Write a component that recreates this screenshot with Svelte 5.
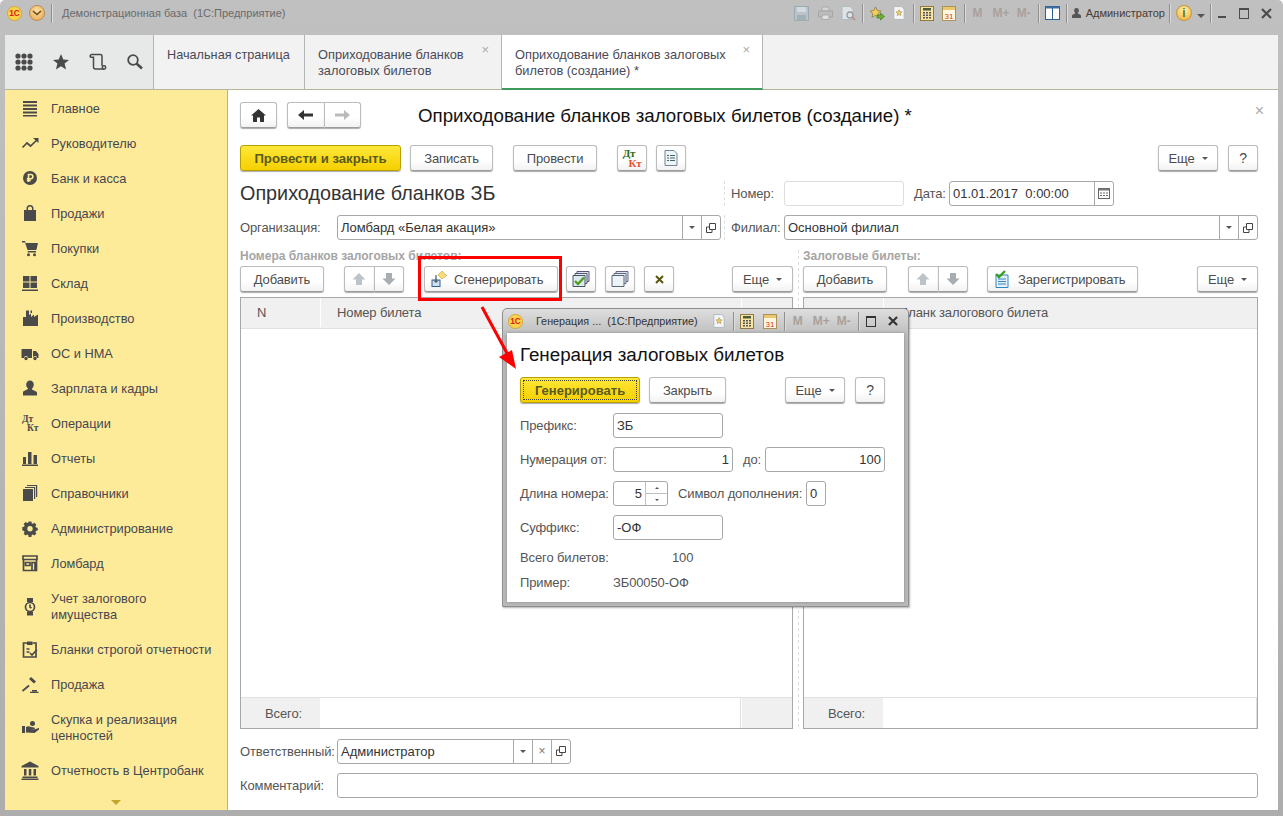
<script lang="ts">
    const DARK = '#4a4a4a';

    type NavItem = { label: string[]; d?: string; s?: string; b?: string; kt?: boolean };

    const nav: NavItem[] = [
        { label: ['Главное'], d: 'M2 2h14v2H2zM2 5.500h14v2H2zM2 9h14v2H2zM2 12.500h14v2H2zM2 16h14v1.500H2z' },
        { label: ['Руководителю'], s: 'M1.500 13.500 6 9l3.500 3L16 6', d: 'M12 4h5.500v5z' },
        { label: ['Банк и касса'], d: 'M9 2a7 7 0 1 0 0 14A7 7 0 0 0 9 2z', b: 'M7.500 13V5.500h2.300a2 2 0 0 1 0 4.200H5.800M5.800 11.500h4' },
        { label: ['Продажи'], d: 'M3 6h2.500V4.500a3.500 3.500 0 0 1 7 0V6H15v11H3zM7 6h4V4.500a2 2 0 0 0-4 0z' },
        { label: ['Покупки'], d: 'M1 2h3l.6 2H17l-1.600 7H6.500L4 3.500H1zM6.700 12h8.300v1.500H6.700zM7.500 14.200a1.500 1.500 0 1 0 0 3 1.500 1.500 0 0 0 0-3zM13.500 14.200a1.500 1.500 0 1 0 0 3 1.500 1.500 0 0 0 0-3z' },
        { label: ['Склад'], d: 'M2 2h6.500v5.500H2zM9.500 2H16v5.500H9.500zM2 8.500h6.500V14H2zM9.500 8.500H16V14H9.500zM1 15.500h16V17H1z' },
        { label: ['Производство'], d: 'M2 17V8l3 0V1.500h3V6l2-1.500V8l3-2.500V8l4-2.500V17zM9.500 1.500H11V4H9.500z' },
        { label: ['ОС и НМА'], d: 'M0.500 5h10.500v9H7a2 2 0 0 0-4 0H.500zM12 7h3l2.500 3v4H16a2 2 0 0 0-4 0zM5 12.800a1.700 1.700 0 1 0 0 3.400 1.700 1.700 0 0 0 0-3.400zM14 12.800a1.700 1.700 0 1 0 0 3.400 1.700 1.700 0 0 0 0-3.400z' },
        { label: ['Зарплата и кадры'], d: 'M9 1.500a3.800 3.800 0 0 1 3.800 4c0 2-1 3.500-1.800 4v1l4 2c.8.400 1 1 1 1.500v2.500H2V13.500c0-.5.200-1.100 1-1.500l4-2V9.500c-.8-.5-1.800-2-1.800-4a3.800 3.800 0 0 1 3.800-4z' },
        { label: ['Операции'], kt: true },
        { label: ['Отчеты'], d: 'M2 8h3v7H2zM7 3h3.500v12H7zM12.500 6H16v9h-3.500zM1 15.500h16V17H1z' },
        { label: ['Справочники'], d: 'M2 5h10v12H2zM13 4v11h1.200V3H4v1zM15 2v11h1.200V1H6v1z' },
        { label: ['Администрирование'], d: 'M7.600 2.500h2.800l.3 1.800 1.200.5 1.500-1 2 2-1 1.500.5 1.200 1.800.3v2.800l-1.800.3-.5 1.200 1 1.500-2 2-1.500-1-1.200.5-.3 1.800H7.600l-.3-1.800-1.200-.5-1.500 1-2-2 1-1.500-.5-1.200-1.800-.3V8.100l1.800-.3.5-1.200-1-1.500 2-2 1.500 1 1.200-.5zM9 7a2.700 2.700 0 1 0 0 5.400A2.700 2.700 0 0 0 9 7z' },
        { label: ['Ломбард'], s: 'M2.500 5.500V16.500H15.500V5.500M2 2h14v3.500H2zM4.500 8.500H9v3H4.500zM11 8.500h3v8h-3z' },
        { label: ['Учет залогового', 'имущества'], s: 'M9 5.500a4.500 4.500 0 1 0 0 9 4.500 4.500 0 0 0 0-9zM9 7.500V10l1.500 1', d: 'M6 1h6v4H6zM6 15h6v3.500H6z' },
        { label: ['Бланки строгой отчетности'], s: 'M6 3H2.500V17H15V3h-3.500M5.500 9h3M5.500 12h3M9 13l2 2 5-5.500', d: 'M6 1.500h5.500V5H6z' },
        { label: ['Продажа'], s: 'M1.500 16 8 10.500', d: 'M8 4l2-2 5 4.500-2 2zM11 15h5v1.500h-5zM9 16.700h8.500V18H9z' },
        { label: ['Скупка и реализация', 'ценностей'], d: 'M1 8h3v7H1zM5 9c2-1 3-1 5 0l3 .5c1 0 1 2 0 2h-3l5-.5 2.500-1c1 0 1 1 .5 1.500L13.500 15 5 14.500zM11.500 3a2.500 2.500 0 1 0 0 5 2.500 2.500 0 0 0 0-5z' },
        { label: ['Отчетность в Центробанк'], d: 'M9 .500 17.500 5v1.500H.500V5zM3 8h2.500v6.500H3zM7.800 8h2.500v6.500H7.800zM12.500 8H15v6.500h-2.500zM1.500 15.500h15V17h-15zM.500 17.500h17V19H.500z' }
    ];

    const sideTools = ['grid', 'star', 'history', 'search'];
</script>

{#snippet logo(size)}
    <svg class="logo" width={size} height={size} viewBox="0 0 18 18">
        <circle cx="9" cy="9" r="8.500" fill="#f9d24a" stroke="#d0a030" />
        <text x="9" y="12.500" text-anchor="middle" class="logo-t">1С</text>
    </svg>
{/snippet}

{#snippet calc()}
    <svg width="14" height="15" viewBox="0 0 14 15"><rect x=".5" y=".5" width="13" height="14" fill="#f6e3a4" stroke="#8d7a44" /><rect x="3" y="2" width="8" height="2.500" fill="#4d5a3a" /><path d="M3 6h2v1.500H3zM6 6h2v1.500H6zM9 6h2v1.500H9zM3 8.500h2V10H3zM6 8.500h2V10H6zM9 8.500h2V10H9zM3 11h2v1.500H3zM6 11h2v1.500H6zM9 11h2v1.500H9z" fill="#555" /></svg>
{/snippet}

{#snippet cal()}
    <svg width="14" height="15" viewBox="0 0 14 15"><rect x=".5" y=".5" width="13" height="14" fill="#fff6e0" stroke="#a9935a" /><rect x="1" y="1" width="12" height="3" fill="#e9c66f" /><text x="7" y="12.500" text-anchor="middle" class="cal-t">31</text></svg>
{/snippet}

{#snippet memory()}
    <span class="mem">M</span><span class="mem m2">M+</span><span class="mem m3">M-</span>
{/snippet}

{#snippet starDoc(w)}
    <svg width={w} height={w + 2} viewBox="0 0 14 16"><path d="M1 .5h9l3 3v12H1z" fill="#f4f6f8" stroke="#aab4bc" /><path d="M7 4l1.100 2.400 2.500.3-1.900 1.700.5 2.600L7 9.700 4.800 11l.5-2.600-1.900-1.700 2.500-.3z" fill="#eccd6a" stroke="#a58a3a" stroke-width=".6" /></svg>
{/snippet}

<div class="window">
    <header class="titlebar">
        <div class="tb-left">
            {@render logo(15)}
            <span class="round-btn"><svg width="10" height="6" viewBox="0 0 10 6"><path d="M1 1l4 3.500L9 1" fill="none" stroke="#6a4a20" stroke-width="1.600" /></svg></span>
            <i class="vsep first"></i>
            <span class="tb-title">Демонстрационная база  (1С:Предприятие)</span>
        </div>
        <div class="tb-right">
            <svg class="t0" width="15" height="15" viewBox="0 0 15 15"><path d="M.5.5h14v14H.5z" fill="#b9c3c9" stroke="#9aa8b0" /><path d="M3 1h9v5H3z" fill="#d4dade" /><path d="M3 9h9v5.500H3z" fill="#a4b0b8" /></svg>
            <svg class="t1" width="15" height="14" viewBox="0 0 15 14"><path d="M4 1h7v4H4z" fill="#d5d5d5" stroke="#aaa" /><path d="M.5 5h14v6H.5z" fill="#bbb" stroke="#a5a5a5" /><path d="M4 9h7v4.500H4z" fill="#e0e0e0" stroke="#aaa" /></svg>
            <svg class="t2" width="15" height="15" viewBox="0 0 15 15"><path d="M1 .5h8l3 3v10H1z" fill="#dde3e6" stroke="#aebbc2" /><circle cx="9" cy="9" r="3" fill="none" stroke="#9a9a9a" stroke-width="1.300" /><path d="M11 11l3 3" stroke="#b88a7a" stroke-width="1.600" /></svg>
            <i class="vsep t3"></i>
            <svg class="t4" width="16" height="15" viewBox="0 0 16 15"><path d="M6.500 1l1.700 3.600 3.800.4-2.800 2.500.8 3.800-3.500-2-3.500 2 .8-3.800L1 5l3.800-.4z" fill="#efcf5e" stroke="#8f7a3c" stroke-width=".8" /><path d="M8 9h3.500V7l4 3.500-4 3.500v-2H8z" fill="#6eb132" stroke="#3f7a1c" stroke-width=".7" /></svg>
            <span class="t5">{@render starDoc(12)}</span>
            <i class="vsep t6"></i>
            <span class="t7">{@render calc()}</span>
            <span class="t8">{@render cal()}</span>
            <i class="vsep t9"></i>
            {@render memory()}
            <i class="vsep t10"></i>
            <svg class="t11" width="15" height="14" viewBox="0 0 15 14"><rect x=".5" y=".5" width="14" height="13" fill="#fdfdfd" stroke="#2f5f90" /><path d="M.5.5h14v2H.5z" fill="#3c6ea3" /><path d="M7.500 2v11" stroke="#2f5f90" /></svg>
            <i class="vsep t12"></i>
            <svg class="t13" width="9" height="10" viewBox="0 0 9 10"><path d="M4.500 0a2.300 2.300 0 0 1 2.300 2.600c0 1-.5 1.900-1 2.300v.7l2.200 1c.6.3 1 .7 1 1.400V10H0V8c0-.7.400-1.100 1-1.400l2.200-1v-.7c-.5-.4-1-1.300-1-2.300A2.300 2.300 0 0 1 4.500 0z" fill="#555" /></svg>
            <span class="t-user">Администратор</span>
            <i class="vsep t14"></i>
            <span class="info">i</span>
            <svg class="t15" width="8" height="4" viewBox="0 0 8 4"><path d="M0 0h8L4 4z" fill="#555" /></svg>
            <i class="vsep t16"></i>
            <span class="win-min"></span>
            <span class="win-max"></span>
            <svg class="win-close" width="11" height="11" viewBox="0 0 11 11"><path d="M1 1l9 9M10 1l-9 9" stroke="#4c4c4c" stroke-width="2.200" /></svg>
        </div>
    </header>

    <nav class="tabsrow">
        <div class="tools">
            {#each sideTools as t}
                <span class="tool">
                    {#if t === 'grid'}
                        <svg width="18" height="18" viewBox="0 0 18 18" fill="#4a4a4a">
                            {#each [3, 9, 15] as y}{#each [3, 9, 15] as x}<circle cx={x} cy={y} r="2.600" />{/each}{/each}
                        </svg>
                    {:else if t === 'star'}
                        <svg width="18" height="18" viewBox="0 0 18 18"><path d="M9 1l2.300 5.500 5.700.4-4.400 3.700 1.500 5.900L9 13.300l-5.100 3.200 1.500-5.900L1 6.900l5.700-.4z" fill="#4a4a4a" /></svg>
                    {:else if t === 'history'}
                        <svg width="18" height="18" viewBox="0 0 18 18" fill="none" stroke="#4a4a4a" stroke-width="1.500"><path d="M3 1.500h8.500c1 0 1.500 1 1.500 2V13M3 1.500a1.500 1.500 0 0 0-1 2.800h2.500V14c0 1.200.8 2 2 2h8.500" /><circle cx="15" cy="14.500" r="1.700" /></svg>
                    {:else}
                        <svg width="18" height="18" viewBox="0 0 18 18" fill="none" stroke="#4a4a4a"><circle cx="7" cy="7" r="4.800" stroke-width="1.800" /><path d="M10.500 10.500l5.500 5" stroke-width="2.600" /></svg>
                    {/if}
                </span>
            {/each}
        </div>
        <div class="tab t-home">Начальная страница</div>
        <div class="tab t-doc">
            <span>Оприходование бланков<br />залоговых билетов</span>
            <b class="tab-x">×</b>
        </div>
        <div class="tab t-active">
            <span>Оприходование бланков залоговых<br />билетов (создание) *</span>
            <b class="tab-x">×</b>
        </div>
    </nav>

    <div class="main">
        <aside class="sidebar">
            <ul>
                {#each nav as item}
                    <li class:two={item.label.length > 1}>
                        <span class="nav-ic">
                            <svg width="18" height="19" viewBox="0 0 18 19">
                                {#if item.kt}
                                    <text x="1" y="8" class="kt">Дт</text>
                                    <text x="6" y="17" class="kt">Кт</text>
                                {/if}
                                {#if item.d}<path d={item.d} fill={DARK} fill-rule="evenodd" />{/if}
                                {#if item.s}<path d={item.s} fill="none" stroke={DARK} stroke-width="1.700" />{/if}
                                {#if item.b}<path d={item.b} fill="none" stroke="#fdeb9a" stroke-width="1.600" />{/if}
                            </svg>
                        </span>
                        <span class="nav-txt">
                            {#each item.label as line}<span>{line}</span>{/each}
                        </span>
                    </li>
                {/each}
            </ul>
            <div class="more-arrow"></div>
        </aside>

        <main class="content">
            <div class="navrow">
                <button class="btn home">
                    <svg width="15" height="13" viewBox="0 0 15 13"><path d="M7.500 0 15 6.500h-2V13H9V8.500H6V13H2V6.500H0z" fill="#333" /></svg>
                </button>
                <div class="pair nav-pair">
                    <button class="btn">
                        <svg width="15" height="10" viewBox="0 0 15 10"><path d="M6 0v3.500h9v3H6V10L0 5z" fill="#333" /></svg>
                    </button>
                    <button class="btn">
                        <svg width="15" height="10" viewBox="0 0 15 10"><path d="M9 0v3.500H0v3h9V10l6-5z" fill="#bbb" /></svg>
                    </button>
                </div>
                <h1>Оприходование бланков залоговых билетов (создание) *</h1>
                <span class="close-form">×</span>
            </div>

            <div class="cmdbar">
                <button class="btn yellow b-post">Провести и закрыть</button>
                <button class="btn b-save">Записать</button>
                <button class="btn b-run">Провести</button>
                <button class="btn sq b-dt"><span class="dt">Дт</span><span class="kt2">Кт</span></button>
                <button class="btn sq">
                    <svg width="14" height="16" viewBox="0 0 14 16"><path d="M1 .5h9l3 3v12H1z" fill="#eef3f6" stroke="#6d8798" /><path d="M3 5h2v1H3zM6 5h5v1H6zM3 7.500h2v1H3zM6 7.500h5v1H6zM3 10h2v1H3zM6 10h5v1H6z" fill="#466" /></svg>
                </button>
                <button class="btn more spacer">Еще<i class="caret"></i></button>
                <button class="btn sq help">?</button>
            </div>

            <div class="head-grid">
                <div class="doc-title">Оприходование бланков ЗБ</div>
                <div class="head-right">
                    <label class="lbl w53" for="num">Номер:</label>
                    <input id="num" class="field disabled w120" />
                    <span class="lbl date-lbl">Дата:</span>
                    <div class="field combo w165">
                        <span class="val">01.01.2017  0:00:00</span>
                        <span class="cell w19"><svg width="12" height="11" viewBox="0 0 12 11"><rect x=".5" y=".5" width="11" height="10" fill="#fff" stroke="#666" /><path d="M.5 .5h11v2H.5z" fill="#777" /><path d="M2 4.500h2v1H2zM5 4.500h2v1H5zM8 4.500h2v1H8zM2 7h2v1H2zM5 7h2v1H5zM8 7h2v1H8z" fill="#666" /></svg></span>
                    </div>
                </div>
                <div class="org">
                    <span class="lbl w97">Организация:</span>
                    <div class="field combo grow">
                        <span class="val">Ломбард «Белая акация»</span>
                        <span class="cell"><i class="caret"></i></span>
                        <span class="cell"><svg width="10" height="10" viewBox="0 0 10 10" fill="none" stroke="#444"><path d="M3.500.5h6v6h-6zM3.500 4H.5v5.500H6V7" /></svg></span>
                    </div>
                </div>
                <div class="branch">
                    <span class="lbl w53">Филиал:</span>
                    <div class="field combo grow">
                        <span class="val">Основной филиал</span>
                        <span class="cell"><i class="caret"></i></span>
                        <span class="cell"><svg width="10" height="10" viewBox="0 0 10 10" fill="none" stroke="#444"><path d="M3.500.5h6v6h-6zM3.500 4H.5v5.500H6V7" /></svg></span>
                    </div>
                </div>
            </div>

            <div class="panes">
                <section class="pane left">
                    <div class="pane-label">Номера бланков залоговых билетов:</div>
                    <div class="pane-bar">
                        <button class="btn add">Добавить</button>
                        <div class="pair updown">
                            <button class="btn"><svg width="14" height="14" viewBox="0 0 14 14"><path d="M7 1l6.500 6.500H10V13H4V7.500H.5z" fill="#bcc3c9" /></svg></button>
                            <button class="btn"><svg width="14" height="14" viewBox="0 0 14 14"><path d="M7 13 .5 6.500H4V1h6v5.500h3.500z" fill="#a8adb2" /></svg></button>
                        </div>
                        <button class="btn gen">
                            <svg width="16" height="16" viewBox="0 0 16 16"><path d="M11 0l4.500 4.500L11 8 7 4z" fill="#f6dd7a" stroke="#d0a838" stroke-width=".7" /><rect x="1" y="9" width="8" height="6.500" fill="#cfe0f0" stroke="#2f5f90" /><path d="M5 4v7M3 9.500l2 2 2-2" fill="none" stroke="#333" /></svg>
                            Сгенерировать
                        </button>
                        <button class="btn sq">
                            <svg width="18" height="17" viewBox="0 0 18 17"><path d="M5 .5h12v10H5z" fill="#dbe6ea" stroke="#557" /><path d="M3 2.500h12v10H3z" fill="#e6eef2" stroke="#557" /><path d="M1 4.500h12v11H1z" fill="#dfeaef" stroke="#456" /><path d="M3 10l3 3 6-6.500" fill="none" stroke="#4aa020" stroke-width="2.400" /></svg>
                        </button>
                        <button class="btn sq">
                            <svg width="18" height="17" viewBox="0 0 18 17"><path d="M5 .5h12v10H5z" fill="#dbe6ea" stroke="#668" /><path d="M3 2.500h12v10H3z" fill="#e6eef2" stroke="#668" /><path d="M1 4.500h12v11H1z" fill="#eef3f6" stroke="#567" /></svg>
                        </button>
                        <button class="btn sq">
                            <svg width="9" height="9" viewBox="0 0 9 9"><path d="M1 1l7 7M8 1 1 8" stroke="#5a5510" stroke-width="2" /></svg>
                        </button>
                        <button class="btn more spacer">Еще<i class="caret"></i></button>
                    </div>
                    <div class="table">
                        <div class="thead">
                            <span class="c-n">N</span>
                            <span class="c-main">Номер билета</span>
                            <span class="c-end"></span>
                        </div>
                        <div class="tbody"></div>
                        <div class="tfoot">
                            <span class="c-n total">Всего:</span>
                            <span class="c-main blank"></span>
                            <span class="c-end"></span>
                        </div>
                    </div>
                </section>

                <div class="dash"></div>

                <section class="pane right">
                    <div class="pane-label">Залоговые билеты:</div>
                    <div class="pane-bar">
                        <button class="btn add">Добавить</button>
                        <div class="pair updown r">
                            <button class="btn"><svg width="14" height="14" viewBox="0 0 14 14"><path d="M7 1l6.500 6.500H10V13H4V7.500H.5z" fill="#bcc3c9" /></svg></button>
                            <button class="btn"><svg width="14" height="14" viewBox="0 0 14 14"><path d="M7 13 .5 6.500H4V1h6v5.500h3.500z" fill="#a8adb2" /></svg></button>
                        </div>
                        <button class="btn reg">
                            <svg width="17" height="18" viewBox="0 0 17 18"><path d="M2 5h12v12.500H2z" fill="#e2f0fa" stroke="#3585c0" /><path d="M4 9h8M4 11.500h8M4 14h8" stroke="#3585c0" /><path d="M2 4l3 3 6-6" fill="none" stroke="#36a01e" stroke-width="2.400" /></svg>
                            Зарегистрировать
                        </button>
                        <button class="btn more spacer">Еще<i class="caret"></i></button>
                    </div>
                    <div class="table">
                        <div class="thead">
                            <span class="c-n r">N</span>
                            <span class="c-main">Бланк залогового билета</span>
                        </div>
                        <div class="tbody"></div>
                        <div class="tfoot">
                            <span class="c-n r total">Всего:</span>
                            <span class="c-main blank"></span>
                        </div>
                    </div>
                </section>
            </div>

            <div class="bottom-row resp">
                <span class="lbl w97">Ответственный:</span>
                <div class="field combo w234">
                    <span class="val">Администратор</span>
                    <span class="cell"><i class="caret"></i></span>
                    <span class="cell x">×</span>
                    <span class="cell"><svg width="10" height="10" viewBox="0 0 10 10" fill="none" stroke="#444"><path d="M3.500.5h6v6h-6zM3.500 4H.5v5.500H6V7" /></svg></span>
                </div>
            </div>
            <div class="bottom-row">
                <span class="lbl w97">Комментарий:</span>
                <input class="field grow" />
            </div>
        </main>
    </div>

    <!-- red callout drawn over the screenshot -->
    <div class="callout"></div>
    <svg class="arrow" width="60" height="90" viewBox="0 0 60 90">
        <path d="M2 2 28 50" stroke="#f00" stroke-width="3" />
        <path d="M36 64 19 52 32 45z" fill="#f00" />
    </svg>

    <div class="dialog">
        <div class="dlg-bar">
            {@render logo(15)}
            <span class="dlg-title">Генерация ...  (1С:Предприятие)</span>
            <span class="dlg-star">{@render starDoc(12)}</span>
            <i class="vsep d-a"></i>
            <span class="d-calc">{@render calc()}</span>
            <span class="d-cal">{@render cal()}</span>
            <i class="vsep d-b"></i>
            {@render memory()}
            <i class="vsep d-c"></i>
            <span class="win-max small"></span>
            <svg class="win-close small" width="10" height="10" viewBox="0 0 11 11"><path d="M1 1l9 9M10 1l-9 9" stroke="#333" stroke-width="2.300" /></svg>
        </div>
        <div class="dlg-body">
            <h2>Генерация залоговых билетов</h2>
            <div class="dlg-cmd">
                <button class="btn yellow focus">Генерировать</button>
                <button class="btn d-close">Закрыть</button>
                <button class="btn more spacer d-more">Еще<i class="caret"></i></button>
                <button class="btn sq help">?</button>
            </div>
            <div class="dlg-row">
                <span class="lbl w93">Префикс:</span>
                <div class="field w110"><span class="val">ЗБ</span></div>
            </div>
            <div class="dlg-row">
                <span class="lbl w93">Нумерация от:</span>
                <div class="field w120 right-al"><span class="val">1</span></div>
                <span class="lbl do">до:</span>
                <div class="field w120 right-al"><span class="val">100</span></div>
            </div>
            <div class="dlg-row">
                <span class="lbl w93">Длина номера:</span>
                <div class="field combo w55 right-al">
                    <span class="val">5</span>
                    <span class="spin"><i class="up"></i><i class="down"></i></span>
                </div>
                <span class="lbl sym">Символ дополнения:</span>
                <div class="field w20"><span class="val">0</span></div>
            </div>
            <div class="dlg-row">
                <span class="lbl w93">Суффикс:</span>
                <div class="field w110"><span class="val">-ОФ</span></div>
            </div>
            <div class="dlg-info first">
                <span class="lbl w93">Всего билетов:</span>
                <span class="lbl total-val">100</span>
            </div>
            <div class="dlg-info">
                <span class="lbl w93">Пример:</span>
                <span class="lbl">ЗБ00050-ОФ</span>
            </div>
        </div>
    </div>
</div>

<style>
    :global(body) {
        margin: 0;
        background: #fff;
    }
    .window {
        position: relative;
        box-sizing: border-box;
        width: 1283px;
        height: 816px;
        padding: 0 5px 6px;
        background: linear-gradient(#c0c0c0, #adadad);
        border-radius: 5px 5px 0 0;
        display: flex;
        flex-direction: column;
        overflow: hidden;
        font-family: "Liberation Sans", Arial, sans-serif;
        font-size: 13px;
        color: #4c4c4c;
    }
    button {
        font-family: inherit;
    }
    .vsep {
        display: block;
        flex: none;
        width: 1px;
        height: 19px;
        background: #8f8f8f;
        box-shadow: 1px 0 0 #ddd;
    }

    /* title bar */
    .titlebar {
        height: 35px;
        flex: none;
        display: flex;
        align-items: center;
        justify-content: space-between;
        padding-bottom: 9px;
        box-sizing: border-box;
    }
    .tb-left,
    .tb-right {
        display: flex;
        align-items: center;
    }
    .tb-left {
        padding-left: 2px;
    }
    .logo {
        display: block;
        flex: none;
    }
    .logo-t {
        font: bold 10px "Liberation Sans", sans-serif;
        fill: #dd1f17;
    }
    .cal-t {
        font: 8px "Liberation Sans", sans-serif;
        fill: #d83a10;
    }
    .round-btn {
        width: 16px;
        height: 16px;
        margin-left: 7px;
        border-radius: 50%;
        background: radial-gradient(circle at 50% 35%, #fbe0a0, #e9a450);
        border: 1px solid #bb8a4c;
        box-sizing: border-box;
        display: flex;
        align-items: center;
        justify-content: center;
    }
    .vsep.first {
        margin-left: 6px;
    }
    .tb-title {
        margin-left: 10px;
        white-space: pre;
        font-size: 11px;
        color: #6a6a6a;
    }
    .tb-right {
        padding-right: 6px;
    }
    .tb-right > * {
        flex: none;
    }
    .t1 { margin-left: 9px; }
    .t2 { margin-left: 8px; }
    .t3 { margin-left: 6px; }
    .t4 { margin-left: 6px; }
    .t5 { margin-left: 8px; }
    .t6 { margin-left: 8px; }
    .t7 { margin-left: 6px; }
    .t8 { margin-left: 8px; }
    .t9 { margin-left: 8px; }
    .t10 { margin-left: 7px; }
    .t11 { margin-left: 6px; }
    .t12 { margin-left: 6px; }
    .t13 { margin-left: 5px; }
    .t14 { margin-left: 4px; }
    .t15 { margin-left: 5px; margin-top: 6px; }
    .t16 { margin-left: 5px; }
    .t5, .t7, .t8, .dlg-star, .d-calc, .d-cal {
        display: flex;
        flex: none;
    }
    .mem {
        flex: none;
        margin-left: 8px;
        font-size: 12px;
        font-weight: bold;
        color: #aaa09a;
    }
    .mem.m2 {
        margin-left: 10px;
    }
    .mem.m3 {
        margin-left: 7px;
    }
    .t-user {
        margin-left: 5px;
        font-size: 11px;
        color: #4a3a30;
        white-space: nowrap;
    }
    .info {
        margin-left: 6px;
        width: 16px;
        height: 16px;
        border-radius: 50%;
        background: radial-gradient(circle at 50% 30%, #fff2b0, #eeaa30);
        border: 1px solid #c79536;
        box-sizing: border-box;
        text-align: center;
        font: bold 12px/14px "Liberation Sans", sans-serif;
        color: #5b7a14;
    }
    .win-min {
        width: 8px;
        height: 2px;
        margin: 8px 0 0 7px;
        background: #4c4c4c;
    }
    .win-max {
        flex: none;
        width: 8px;
        height: 8px;
        margin-left: 13px;
        border: 1.500px solid #4c4c4c;
        border-top-width: 2px;
    }
    .win-close {
        flex: none;
        margin-left: 12px;
    }

    /* tabs */
    .tabsrow {
        height: 55px;
        flex: none;
        display: flex;
        background: #f2f2f2;
        border-bottom: 1px solid #b5b39a;
        box-sizing: border-box;
    }
    .tools {
        width: 149px;
        flex: none;
        box-sizing: border-box;
        background: #e7e8e8;
        border-right: 1px solid #b4b4b4;
        display: flex;
        align-items: center;
        padding: 0 0 0 10px;
        gap: 19px;
    }
    .tool {
        display: flex;
    }
    .tab {
        flex: none;
        box-sizing: border-box;
        padding: 12px 0 0 13px;
        font-size: 12.800px;
        line-height: 16px;
        color: #4a4a58;
        border-right: 1px solid #b4b4b4;
        height: 54px;
        position: relative;
        white-space: nowrap;
    }
    .t-home {
        width: 151px;
        font-size: 12.700px;
    }
    .t-doc { width: 197px; }
    .t-active {
        width: 261px;
        background: #fff;
        border-bottom: 2px solid #3e9a5a;
        height: 55px;
    }
    .tab-x {
        position: absolute;
        right: 12px;
        top: 7px;
        font-weight: normal;
        font-size: 13px;
        color: #aaa;
    }

    /* sidebar */
    .main {
        flex: 1;
        min-height: 0;
        display: flex;
        background: #fff;
    }
    .sidebar {
        width: 223px;
        flex: none;
        box-sizing: border-box;
        background: #fdeb9a;
        border-right: 1px solid #c9b35a;
        display: flex;
        flex-direction: column;
        justify-content: space-between;
    }
    .sidebar ul {
        list-style: none;
        margin: 0;
        padding: 1px 0 0;
    }
    .sidebar li {
        height: 35px;
        display: flex;
        align-items: center;
        padding-left: 16px;
    }
    .sidebar li.two {
        height: 51px;
    }
    .nav-ic {
        width: 30px;
        flex: none;
        display: flex;
    }
    .kt {
        font: bold 9.500px "Liberation Serif", serif;
        fill: #4a4a4a;
    }
    .nav-txt {
        display: flex;
        flex-direction: column;
        font-size: 12.800px;
        line-height: 16px;
        color: #47474f;
        white-space: nowrap;
    }
    .more-arrow {
        align-self: center;
        margin-bottom: 5px;
        width: 0;
        height: 0;
        border: 5px solid transparent;
        border-top: 5px solid #c4a52c;
        border-bottom: 0;
    }

    /* form */
    .content {
        flex: 1;
        min-width: 0;
        box-sizing: border-box;
        padding: 12px 20px 12px 12px;
        display: flex;
        flex-direction: column;
    }
    .btn {
        height: 26px;
        box-sizing: border-box;
        padding: 0;
        border: 1px solid #bcbcbc;
        border-bottom-color: #9c9c9c;
        border-radius: 3px;
        background: linear-gradient(#fff 60%, #f2f2f2);
        box-shadow: 0 1px 1px #aaa;
        font-size: 13px;
        letter-spacing: -.12px;
        color: #4c4c4c;
        display: flex;
        align-items: center;
        justify-content: center;
        flex: none;
    }
    .btn.yellow {
        background: linear-gradient(#ffe83a, #f5cf00);
        border-color: #b8a000;
        font-weight: bold;
        font-size: 13px;
        letter-spacing: 0;
        color: #5a5a20;
    }
    .b-post.btn {
        font-size: 13.200px;
    }
    .btn.sq {
        width: 30px;
    }
    .btn.more {
        width: 60px;
    }
    .pane-bar .btn.more {
        width: 61px;
    }
    .spacer {
        margin-left: auto;
    }
    .caret {
        display: inline-block;
        width: 0;
        height: 0;
        border: 3px solid transparent;
        border-top: 3px solid #555;
        border-bottom: 0;
    }
    .btn .caret {
        margin-left: 7px;
    }
    .pair {
        display: flex;
        flex: none;
    }
    .pair .btn {
        flex: 1;
        border-radius: 0;
    }
    .pair .btn:first-child {
        border-radius: 3px 0 0 3px;
        border-right: 0;
    }
    .pair .btn:last-child {
        border-radius: 0 3px 3px 0;
    }
    .navrow {
        height: 26px;
        display: flex;
        align-items: center;
        flex: none;
    }
    .home {
        width: 37px;
    }
    .nav-pair {
        width: 74px;
        margin-left: 10px;
    }
    h1 {
        margin: 1px 0 0 57px;
        font-size: 18.700px;
        font-weight: normal;
        color: #111;
        white-space: nowrap;
    }
    .close-form {
        margin-left: auto;
        margin-right: -6px;
        margin-top: -8px;
        font-size: 16px;
        color: #aaa;
    }
    .cmdbar {
        display: flex;
        margin-top: 17px;
        height: 26px;
        flex: none;
    }
    .b-post { width: 161px; }
    .b-save { width: 83px; margin-left: 9px; }
    .b-run { width: 84px; margin-left: 20px; }
    .b-dt {
        margin-left: 20px;
        flex-direction: column;
        font: bold 11px/10px "Liberation Serif", serif;
    }
    .b-dt + .btn { margin-left: 9px; }
    .dt { color: #2f6a1a; margin-left: -6px; }
    .kt2 { color: #e8503a; margin-left: 6px; }
    .help {
        margin-left: 10px;
        font-size: 14px;
    }
    .head-grid {
        margin-top: 10px;
        display: grid;
        grid-template-columns: 484px 1fr;
        row-gap: 9px;
        flex: none;
    }
    .doc-title {
        font-size: 19.800px;
        line-height: 25px;
        color: #333;
        white-space: nowrap;
    }
    .head-right,
    .org,
    .branch {
        display: flex;
        align-items: center;
        height: 25px;
    }
    .head-grid > :nth-child(even) {
        border-left: 1px dashed #ddd;
        padding-left: 6px;
    }
    .org {
        padding-right: 3px;
    }
    .lbl {
        flex: none;
        font-size: 13px;
        letter-spacing: -.12px;
        color: #555;
        white-space: nowrap;
    }
    .w53 { width: 53px; }
    .w97 { width: 97px; }
    .w93 { width: 93px; }
    .date-lbl {
        margin-left: 10px;
        width: 35px;
    }
    .field {
        box-sizing: border-box;
        height: 25px;
        border: 1px solid #a8a8a8;
        border-radius: 3px;
        background: #fff;
        display: flex;
        align-items: center;
        padding: 0;
        font-size: 13px;
        color: #333;
        flex: none;
        font-family: inherit;
    }
    .field.disabled {
        border-color: #ddd;
    }
    .field.grow {
        flex: 1;
        min-width: 0;
    }
    .val {
        flex: 1;
        padding: 0 3px;
        white-space: pre;
    }
    .cell {
        flex: none;
        width: 19px;
        height: 100%;
        border-left: 1px solid #a8a8a8;
        display: flex;
        align-items: center;
        justify-content: center;
        box-sizing: border-box;
    }
    .cell.x {
        color: #777;
        font-size: 12px;
    }
    .w19 { width: 19px; }
    .w120 { width: 120px; }
    .w165 { width: 165px; }
    .w234 { width: 234px; }
    .w110 { width: 110px; }
    .w55 { width: 55px; }
    .w20 { width: 20px; }

    /* tables */
    .panes {
        flex: 1;
        min-height: 0;
        margin-top: 10px;
        display: flex;
    }
    .pane {
        display: flex;
        flex-direction: column;
    }
    .pane.left {
        width: 553px;
    }
    .pane.right {
        flex: 1;
        min-width: 0;
    }
    .dash {
        width: 10px;
        flex: none;
        background: linear-gradient(#ddd 50%, transparent 50%) 5px 0 / 1px 6px repeat-y;
    }
    .pane-label {
        height: 16px;
        line-height: 12px;
        font-size: 12px;
        font-weight: bold;
        color: #a5a5a5;
        white-space: nowrap;
        overflow: hidden;
    }
    .pane-bar {
        display: flex;
        height: 26px;
        flex: none;
    }
    .add { width: 84px; }
    .updown {
        width: 60px;
        margin-left: 20px;
    }
    .updown.r {
        margin-left: 21px;
    }
    .gen {
        width: 134px;
        margin-left: 20px;
        gap: 7px;
        padding-left: 6px;
        justify-content: flex-start;
    }
    .gen + .btn { margin-left: 8px; }
    .gen + .btn + .btn { margin-left: 9px; }
    .gen + .btn + .btn + .btn { margin-left: 9px; }
    .reg {
        width: 151px;
        margin-left: 19px;
        gap: 7px;
        padding-left: 6px;
        justify-content: flex-start;
    }
    .table {
        flex: 1;
        min-height: 0;
        margin-top: 5px;
        border: 1px solid #a8a8a8;
        display: flex;
        flex-direction: column;
    }
    .thead,
    .tfoot {
        height: 31px;
        flex: none;
        display: flex;
        background: #f0f0f0;
        font-size: 13px;
        letter-spacing: -.12px;
        color: #555;
    }
    .thead {
        border-bottom: 1px solid #e0e0e0;
        box-sizing: border-box;
        padding-bottom: 1px;
    }
    .tfoot {
        border-top: 1px solid #e0e0e0;
        box-sizing: border-box;
    }
    .tbody {
        flex: 1;
        background: #fff;
    }
    .thead span,
    .tfoot span {
        display: flex;
        align-items: center;
        box-sizing: border-box;
        white-space: nowrap;
    }
    .c-n {
        width: 80px;
        flex: none;
        padding-left: 16px;
        border-right: 1px solid #fff;
    }
    .c-n.total {
        padding-left: 24px;
    }
    .c-main {
        flex: 1;
        padding-left: 16px;
    }
    .c-main.blank {
        background: #fff;
        border-right: 1px solid #e0e0e0;
    }
    .c-end {
        width: 51px;
        flex: none;
        border-left: 1px solid #fff;
    }
    .bottom-row {
        display: flex;
        align-items: center;
        flex: none;
        margin-top: 10px;
        height: 25px;
    }
    .bottom-row.resp {
        height: 24px;
    }

    /* overlay notes */
    .callout {
        position: absolute;
        left: 418px;
        top: 256px;
        width: 144px;
        height: 45px;
        box-sizing: border-box;
        border: 3px solid #f00;
    }
    .arrow {
        position: absolute;
        left: 480px;
        top: 305px;
        z-index: 3;
    }

    /* dialog */
    .dialog {
        position: absolute;
        left: 502px;
        top: 308px;
        width: 407px;
        height: 299px;
        box-sizing: border-box;
        z-index: 2;
        border: 1px solid #8e8e8e;
        border-radius: 5px 5px 0 0;
        background: linear-gradient(#dedede, #b9b9b9 30px, #b9b9b9);
        box-shadow: 1px 1px 2px rgba(0, 0, 0, .3);
        padding: 0 4px 4px;
        display: flex;
        flex-direction: column;
    }
    .dlg-bar {
        height: 24px;
        flex: none;
        display: flex;
        align-items: center;
        padding-left: 1px;
    }
    .dlg-title {
        margin-left: 13px;
        white-space: pre;
        font-size: 10.800px;
        color: #333;
    }
    .dlg-star { margin-left: 15px; }
    .d-a { margin-left: 8px; }
    .d-calc { margin-left: 6px; }
    .d-cal { margin-left: 9px; }
    .d-b { margin-left: 7px; }
    .d-c { margin-left: 7px; }
    .win-max.small {
        margin-left: 7px;
        width: 8px;
        height: 8px;
        border-color: #333;
    }
    .win-close.small {
        margin-left: 12px;
    }
    .dlg-body {
        flex: 1;
        background: #fff;
        padding: 9px 19px 0 13px;
        box-shadow: 0 0 3px rgba(0, 0, 0, .25);
    }
    h2 {
        margin: 0;
        font-size: 18.800px;
        line-height: 25px;
        font-weight: normal;
        color: #111;
        white-space: nowrap;
    }
    .dlg-cmd {
        display: flex;
        margin-top: 10px;
    }
    .focus {
        width: 120px;
        outline: 1px dotted #443;
        outline-offset: -4px;
    }
    .d-close {
        width: 77px;
        margin-left: 9px;
    }
    .d-more {
        width: 61px;
    }
    .dlg-row {
        display: flex;
        align-items: center;
        margin-top: 9px;
        height: 25px;
    }
    .dlg-cmd + .dlg-row {
        margin-top: 10px;
    }
    .right-al .val {
        text-align: right;
        padding: 0 3px;
    }
    .do {
        width: 32px;
        padding-left: 10px;
        box-sizing: border-box;
    }
    .sym {
        margin-left: 10px;
        width: 128px;
    }
    .spin {
        width: 21px;
        height: 100%;
        border-left: 1px solid #c0c0c0;
        display: flex;
        flex-direction: column;
        flex: none;
    }
    .spin i {
        flex: 1;
        display: flex;
        align-items: center;
        justify-content: center;
    }
    .spin i::after {
        content: '';
        border: 2px solid transparent;
    }
    .spin .up {
        border-bottom: 1px solid #c0c0c0;
    }
    .spin .up::after {
        border-bottom: 2px solid #555;
        border-top: 0;
    }
    .spin .down::after {
        border-top: 2px solid #555;
        border-bottom: 0;
    }
    .dlg-info {
        display: flex;
        align-items: center;
        height: 16px;
        margin-top: 9px;
    }
    .total-val {
        margin-left: 59px;
    }
</style>
